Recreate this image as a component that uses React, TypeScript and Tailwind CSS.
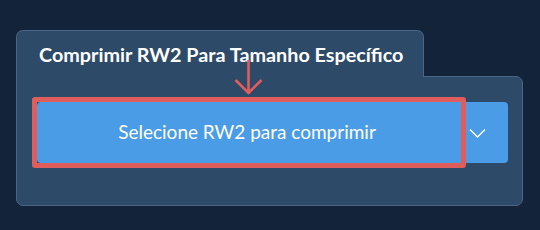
export default function App() {
  return (
    <div
      className="w-[540px] h-[230px] bg-[#12233a] pt-[30px] pl-4"
      style={{ fontFamily: 'Lato, "Noto Sans", sans-serif' }}
    >
      <div className="relative w-[507px]">
        <div className="relative z-10 -mb-px h-[47px] w-[408px] rounded-t-[7px] border border-b-0 border-[#4b6584] bg-[#2d4a69] pl-[22px] pt-[12px]">
          <h2 className="text-[19.8px] font-bold leading-[1.2] text-white">
            Comprimir RW2 Para Tamanho Específico
          </h2>
        </div>
        <div className="h-[130px] rounded-tr-[7px] rounded-b-[7px] border border-[#4b6584] bg-[#2d4a69] pl-[20px] pr-[14px] pt-[25px]">
          <div className="relative flex h-[61px] rounded-[4px] bg-[#4b9ce6]">
            <button className="flex-1 pr-[5px] text-[19px] text-white">Selecione RW2 para comprimir</button>
            <button className="flex w-[46px] items-center pl-[7px]">
              <svg width="17" height="10" viewBox="0 0 17 10" fill="none">
                <path d="M1 1.5 8.5 9 16 1.5" stroke="white" strokeWidth="1.4" />
              </svg>
            </button>
            <div className="pointer-events-none absolute -left-[5px] -top-[5px] h-[71px] w-[434px] rounded-[3px] border-[5px] border-[#df5d5b]" />
          </div>
        </div>
        <svg
          className="pointer-events-none absolute left-[218px] top-[29px] z-20"
          width="30"
          height="38"
          viewBox="0 0 30 38"
          fill="none"
        >
          <path d="M14.5 1v34M1.5 21 14.5 34 27.5 21" stroke="#df5d5b" strokeWidth="2.6" />
        </svg>
      </div>
    </div>
  );
}
